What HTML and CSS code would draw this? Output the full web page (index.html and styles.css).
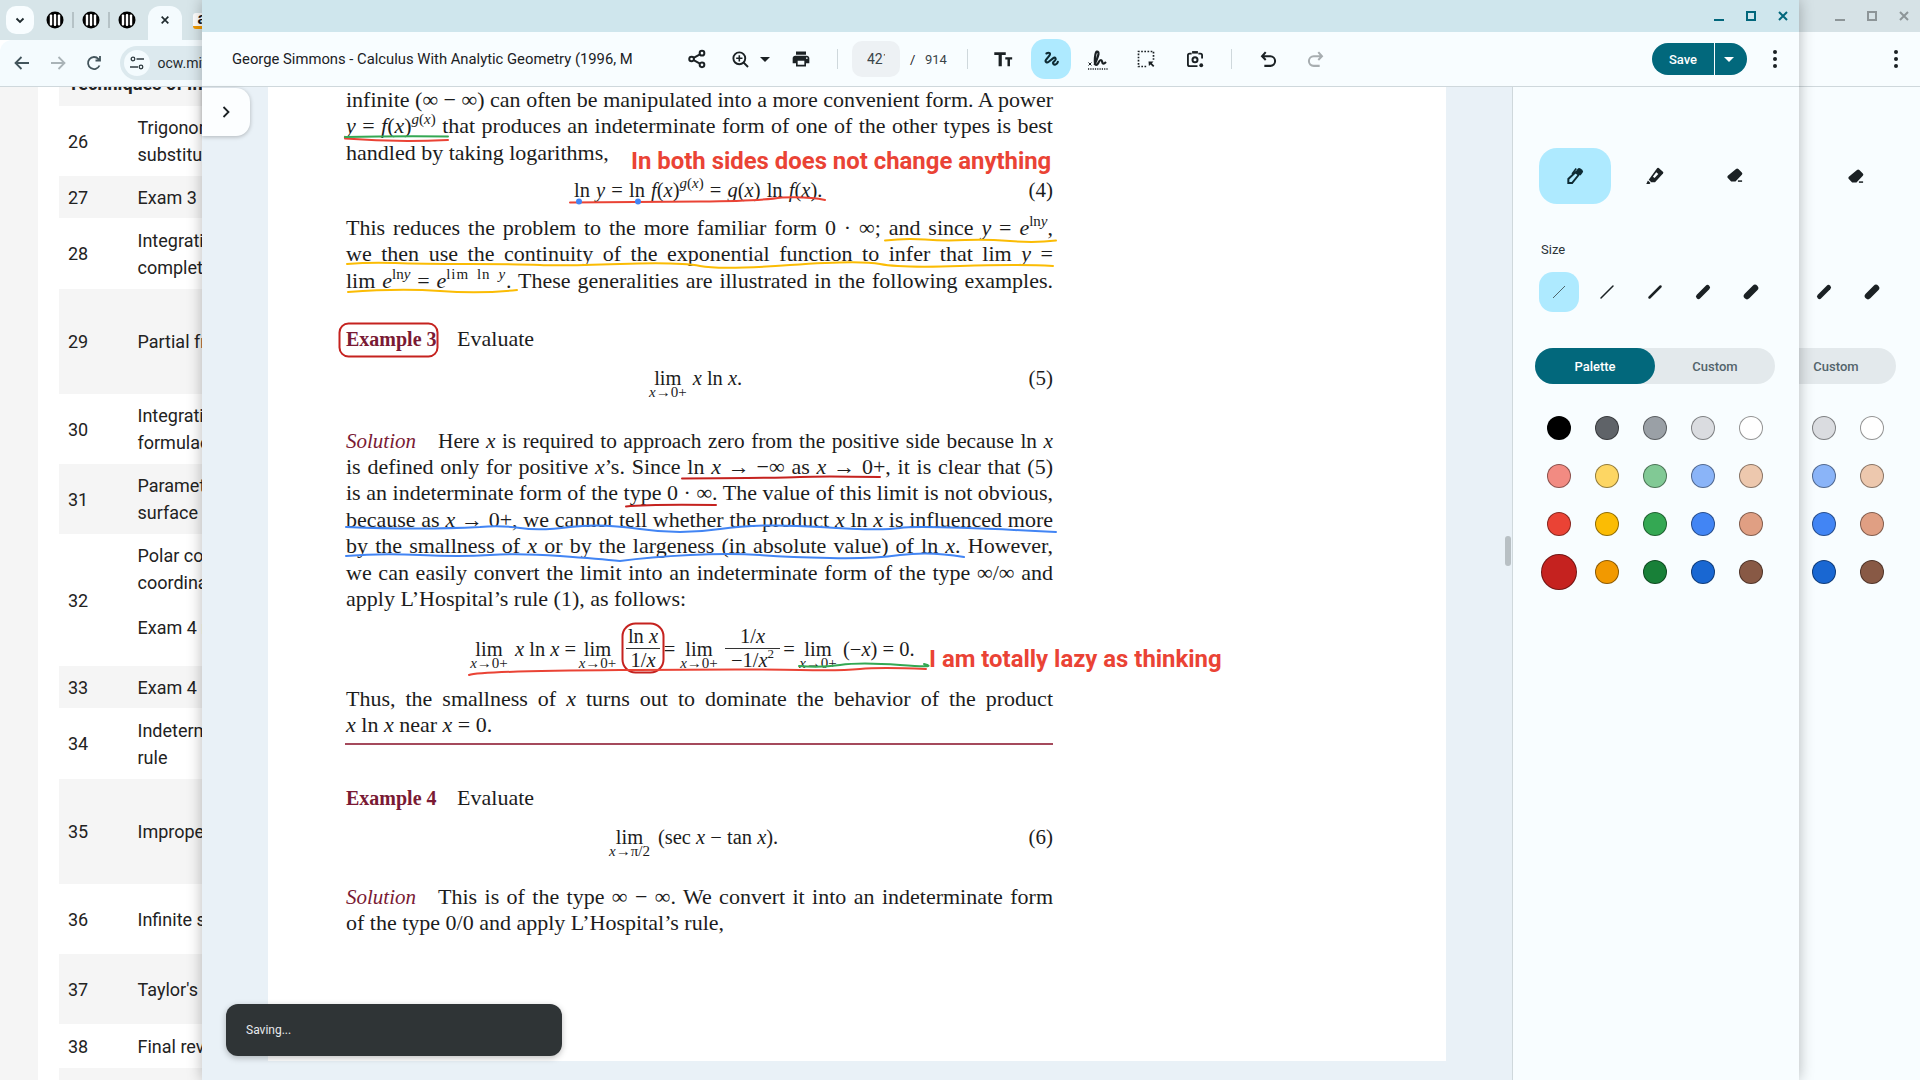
FILE: index.html
```html
<!DOCTYPE html>
<html lang="en">
<head>
<meta charset="utf-8">
<title>George Simmons - Calculus With Analytic Geometry</title>
<link rel="stylesheet" href="styles.css">
</head>
<body>
<svg class="defs" width="0" height="0" aria-hidden="true">
  <symbol id="i-eraser" viewBox="0 0 24 24"><path d="M13.2 3.6a2 2 0 0 1 2.8 0l4.2 4.2a2 2 0 0 1 0 2.800l-7.600 7.900H7.400l-4-4a2 2 0 0 1 0-2.800z" fill="#1b2124"/><rect x="15.500" y="17.200" width="5" height="1.800" fill="#1b2124"/></symbol>
  <symbol id="i-dots" viewBox="0 0 24 24"><circle cx="12" cy="5" r="2" fill="#1b2124"/><circle cx="12" cy="12" r="2" fill="#1b2124"/><circle cx="12" cy="19" r="2" fill="#1b2124"/></symbol>
  <symbol id="i-min" viewBox="0 0 12 12"><rect x="1" y="9" width="10" height="2" fill="currentColor"/></symbol>
  <symbol id="i-max" viewBox="0 0 12 12"><rect x="2" y="2" width="8" height="8" fill="none" stroke="currentColor" stroke-width="2"/></symbol>
  <symbol id="i-close" viewBox="0 0 12 12"><path d="M2 2l8 8M10 2l-8 8" fill="none" stroke="currentColor" stroke-width="2"/></symbol>
  <symbol id="i-ocw" viewBox="0 0 18 18"><circle cx="9" cy="9" r="8.500" fill="#000"/><rect x="3.800" y="3.500" width="2.400" height="11" rx="1" fill="#fff"/><rect x="7.800" y="3" width="2.400" height="12" rx="1" fill="#fff"/><rect x="11.800" y="3.500" width="2.400" height="11" rx="1" fill="#fff"/></symbol>
</svg>

<main class="desktop">
  <section class="browser">
    <header class="tabbar">
      <button class="tablist"><svg width="12" height="12" viewBox="0 0 12 12"><path d="M2.500 4.500 6 8l3.500-3.500" fill="none" stroke="#1f2a2e" stroke-width="1.800"/></svg></button>
      <span class="favtab"><svg width="18" height="18"><use href="#i-ocw"/></svg></span>
      <i class="tabsep"></i>
      <span class="favtab"><svg width="18" height="18"><use href="#i-ocw"/></svg></span>
      <i class="tabsep"></i>
      <span class="favtab"><svg width="18" height="18"><use href="#i-ocw"/></svg></span>
      <span class="acttab"><svg width="10" height="10"><use href="#i-close"/></svg></span>
      <span class="amzn">a</span>
    </header>
    <nav class="navbar">
      <svg class="nav" width="20" height="20" viewBox="0 0 20 20"><path d="M17 10H4M9.500 4 3.500 10l6 6" fill="none" stroke="#43555c" stroke-width="1.800"/></svg>
      <svg class="nav" width="20" height="20" viewBox="0 0 20 20"><path d="M3 10h13M10.500 4l6 6-6 6" fill="none" stroke="#a9b3b7" stroke-width="1.800"/></svg>
      <svg class="nav" width="20" height="20" viewBox="0 0 20 20"><path d="M15.500 12.500A6 6 0 1 1 14.500 6L16 7.500M16 3v4.500h-4.500" fill="none" stroke="#43555c" stroke-width="1.800"/></svg>
      <div class="omnibox">
        <span class="tune"><svg width="16" height="16" viewBox="0 0 16 16"><g fill="none" stroke="#2f3b40" stroke-width="1.300"><circle cx="4" cy="4" r="1.800"/><path d="M7.500 4H15M1 12h8"/><circle cx="12" cy="12" r="1.800"/></g></svg></span>
        <span class="url">ocw.mit</span>
      </div>
    </nav>
    <div class="site">
      <div class="rows">
        <div class="row head gray"><span class="headtext">Techniques of Integration</span></div>
        <div class="row h70"><span>26</span><span>Trigonometric<br>substitution</span></div>
        <div class="row h42 gray"><span>27</span><span>Exam 3</span></div>
        <div class="row h71"><span>28</span><span>Integration by inverse<br>completing the square</span></div>
        <div class="row h105 gray"><span>29</span><span>Partial fractions</span></div>
        <div class="row h70"><span>30</span><span>Integration by parts<br>formulae</span></div>
        <div class="row h70 gray"><span>31</span><span>Parametric equations<br>surface area</span></div>
        <div class="row h132"><span>32</span><div><p class="para">Polar coordinates<br>coordinates</p><p class="para">Exam 4 review</p></div></div>
        <div class="row h42 gray"><span>33</span><span>Exam 4</span></div>
        <div class="row h71"><span>34</span><span>Indeterminate forms<br>rule</span></div>
        <div class="row h105 gray"><span>35</span><span>Improper integrals</span></div>
        <div class="row h70"><span>36</span><span>Infinite series</span></div>
        <div class="row h70 gray"><span>37</span><span>Taylor's series</span></div>
        <div class="row h44"><span>38</span><span>Final review</span></div>
        <div class="row h70 gray"></div>
      </div>
    </div>
  </section>

  <aside class="under">
    <div class="under-title">
      <svg width="12" height="12"><use href="#i-min"/></svg>
      <svg width="12" height="12"><use href="#i-max"/></svg>
      <svg width="12" height="12"><use href="#i-close"/></svg>
    </div>
    <div class="under-tool"><svg width="24" height="24"><use href="#i-dots"/></svg></div>
    <div class="under-panel">
      <div class="under-eraser"><svg width="20" height="20"><use href="#i-eraser"/></svg></div>
      <div class="under-sizes">
        <span class="cell"><svg width="24" height="24"><line x1="7.500" y1="16.500" x2="16.500" y2="7.500" class="pen s4"/></svg></span>
        <span class="cell"><svg width="24" height="24"><line x1="8" y1="16" x2="16" y2="8" class="pen s5"/></svg></span>
      </div>
      <div class="under-pill">Custom</div>
      <div class="under-dots">
        <span class="cell"><i class="dot" style="background:#dadce0"></i></span><span class="cell"><i class="dot" style="background:#fff"></i></span>
        <span class="cell"><i class="dot" style="background:#8ab4f8"></i></span><span class="cell"><i class="dot" style="background:#edc8ae"></i></span>
        <span class="cell"><i class="dot" style="background:#4285f4"></i></span><span class="cell"><i class="dot" style="background:#e09f83"></i></span>
        <span class="cell"><i class="dot" style="background:#1967d2"></i></span><span class="cell"><i class="dot" style="background:#885945"></i></span>
      </div>
    </div>
  </aside>

  <section class="app">
    <div class="app-title">
      <svg width="12" height="12"><use href="#i-min"/></svg>
      <svg width="12" height="12"><use href="#i-max"/></svg>
      <svg width="12" height="12"><use href="#i-close"/></svg>
    </div>
    <div class="app-tools">
      <div class="doc-title">George Simmons - Calculus With Analytic Geometry (1996, M</div>
      <button class="btn m-share"><svg width="20" height="20" viewBox="0 0 24 24"><g fill="none" stroke="#1b2124" stroke-width="2.400"><circle cx="18" cy="5" r="2.800"/><circle cx="5.500" cy="12" r="2.800"/><circle cx="18" cy="19" r="2.800"/><path d="M8 10.600l7.500-4.200M8 13.400l7.500 4.200"/></g></svg></button>
      <button class="btn m-zoom"><svg width="19" height="19" viewBox="0 0 24 24"><g fill="none" stroke="#1b2124" stroke-width="2.400"><circle cx="10.500" cy="10.500" r="7.500"/><path d="M15.500 15.500 21.500 21.500"/></g><path d="M9.500 6.500h2v3H14.500v2h-3v3h-2v-3h-3v-2h3z" fill="#1b2124"/></svg></button>
      <span class="caret dark"></span>
      <button class="btn m-print"><svg width="20" height="20" viewBox="0 0 24 24"><path d="M19 8H5c-1.660 0-3 1.340-3 3v6h4v4h12v-4h4v-6c0-1.660-1.340-3-3-3zm-3 11H8v-5h8v5zm3-7c-.55 0-1-.45-1-1s.45-1 1-1 1 .45 1 1-.45 1-1 1zm-1-9H6v4h12V3z" fill="#1b2124"/></svg></button>
      <i class="vsep m-s1"></i>
      <div class="pagebox"><span class="pagenum">421</span></div>
      <span class="slash">/</span>
      <span class="total">914</span>
      <i class="vsep m-s2"></i>
      <button class="btn m-t"><svg width="22" height="22" viewBox="0 0 24 24"><path d="M2.500 4.500h12.500v3H10.700V20H7.200V7.500H2.500zM14.500 10h7.500v2.500h-2.400V20h-2.700v-7.500H14.500z" fill="#1b2124"/></svg></button>
      <button class="btn on m-g"><svg width="22" height="22" viewBox="0 0 24 24"><path d="M7 6c3-2 5 0 3 2.500L6.500 13c-1.500 2 1 3.500 3 2l5-4c2-1.500 3.500 1 2 2.500l-2 2c-1 1.200.5 3 2.500 2.500 1.500-.4 2.200-1.500 2.500-3" fill="none" stroke="#0e2a33" stroke-width="2.300" stroke-linecap="round"/></svg></button>
      <button class="btn m-g1"><svg width="24" height="24" viewBox="0 0 24 24"><path d="M2.500 15.500l3 3M5.500 15.500l-3 3" stroke="#1b2124" fill="none" stroke-width="1"/><path d="M8.500 18c1.500-3.500 3.500-8 4-11 .3-2-1.500-3.500-2.500-1.500-1 2-1.500 8.500-1 11 .3 1.800 2 2 3 0 .8-1.500 1.500-3.500 3-3.500s.8 3 2 3.500c1 .4 2-.5 3-1.500" fill="none" stroke="#1b2124" stroke-width="2.200"/><path d="M2 22h20" stroke="#1b2124" stroke-width="1.300" stroke-dasharray="1.200 1.100"/></svg></button>
      <button class="btn m-g2"><svg width="20" height="20" viewBox="0 0 24 24"><path d="M21 13V3H3v18h10" fill="none" stroke="#1b2124" stroke-width="2" stroke-dasharray="2 1.800"/><path d="M15 15h6l-2 2 3 3-1.500 1.500-3-3-2 2z" fill="#1b2124"/></svg></button>
      <button class="btn m-g3"><svg width="20" height="20" viewBox="0 0 24 24"><path d="M16 5.500h2.500a2 2 0 0 1 2 2v4M8 5.500H5.500a2 2 0 0 0-2 2v11a2 2 0 0 0 2 2H15" fill="none" stroke="#1b2124" stroke-width="2.200"/><path d="M8.500 2.500h7v3h-7z" fill="#1b2124"/><circle cx="12" cy="13" r="3" fill="none" stroke="#1b2124" stroke-width="2.400"/><circle cx="19.500" cy="19.500" r="2.300" fill="#1b2124"/></svg></button>
      <i class="vsep m-s3"></i>
      <button class="btn m-u"><svg width="22" height="22" viewBox="0 0 24 24"><path d="M9.500 4.500 5.500 9l4 4M5.500 9h9a5 5 0 0 1 0 10.500H8" fill="none" stroke="#1b2124" stroke-width="2.200"/></svg></button>
      <button class="btn m-r"><svg width="22" height="22" viewBox="0 0 24 24"><path d="M14.500 4.500l4 4.500-4 4M18.500 9h-9a5 5 0 0 0 0 10.500H16" fill="none" stroke="#a7adb0" stroke-width="2.200"/></svg></button>
      <div class="save"><span class="save-l">Save</span><span class="save-r"><span class="caret light"></span></span></div>
      <button class="btn m-dots"><svg width="24" height="24"><use href="#i-dots"/></svg></button>
    </div>
    <div class="app-body">
      <div class="viewer">
        <button class="expand"><svg width="16" height="16" viewBox="0 0 16 16"><path d="M5.500 3l5 5-5 5" fill="none" stroke="#1b2124" stroke-width="1.800"/></svg></button>
        <article class="sheet">
          <div class="ln">infinite (∞ − ∞) can often be manipulated into a more convenient form. A power</div>
          <div class="ln"><em>y</em> = <em>f</em>(<em>x</em>)<sup><em>g</em>(<em>x</em>)</sup> that produces an indeterminate form of one of the other types is best</div>
          <div class="ln free">handled by taking logarithms,</div>
          <div class="eq eq4"><span class="eq4-body">ln <em>y</em> = ln <em>f</em>(<em>x</em>)<sup><em>g</em>(<em>x</em>)</sup> = <em>g</em>(<em>x</em>) ln <em>f</em>(<em>x</em>).</span><span class="no">(4)</span></div>
          <div class="ln m-b">This reduces the problem to the more familiar form 0 · ∞; and since <em>y</em> = <em>e</em><sup>ln<em>y</em></sup>,</div>
          <div class="ln">we then use the continuity of the exponential function to infer that lim <em>y</em> =</div>
          <div class="ln">lim <em>e</em><sup>ln<em>y</em></sup> = <em>e</em><sup class="wide">lim ln <em>y</em></sup>. These generalities are illustrated in the following examples.</div>
          <div class="ln free m-ex3"><b class="ex">Example 3</b><span class="ev">Evaluate</span></div>
          <div class="eq eq5"><span class="lim"><span>lim</span><small><em>x</em>→0+</small></span><span class="expr"><em>x</em> ln <em>x</em>.</span><span class="no">(5)</span></div>
          <div class="ln m-sol"><em class="sol">Solution</em>Here <em>x</em> is required to approach zero from the positive side because ln <em>x</em></div>
          <div class="ln">is defined only for positive <em>x</em>’s. Since ln <em>x</em> → −∞ as <em>x</em> → 0+, it is clear that (5)</div>
          <div class="ln">is an indeterminate form of the type 0 · ∞. The value of this limit is not obvious,</div>
          <div class="ln">because as <em>x</em> → 0+, we cannot tell whether the product <em>x</em> ln <em>x</em> is influenced more</div>
          <div class="ln">by the smallness of <em>x</em> or by the largeness (in absolute value) of ln <em>x</em>. However,</div>
          <div class="ln">we can easily convert the limit into an indeterminate form of the type ∞/∞ and</div>
          <div class="ln free">apply L’Hospital’s rule (1), as follows:</div>
          <div class="math">
            <span class="lim"><span>lim</span><small><em>x</em>→0+</small></span>
            <span class="mexpr"><em>x</em> ln <em>x</em> =</span>
            <span class="lim"><span>lim</span><small><em>x</em>→0+</small></span>
            <span class="frac f1"><span>ln <em>x</em></span><span>1/<em>x</em></span></span>
            <span class="meq">=</span>
            <span class="lim"><span>lim</span><small><em>x</em>→0+</small></span>
            <span class="frac f2"><span>1/<em>x</em></span><span>−1/<em>x</em><sup>2</sup></span></span>
            <span class="meq">=</span>
            <span class="lim"><span>lim</span><small><em>x</em>→0+</small></span>
            <span class="mexpr end">(−<em>x</em>) = 0.</span>
          </div>
          <div class="ln m-thus">Thus, the smallness of <em>x</em> turns out to dominate the behavior of the product</div>
          <div class="ln free"><em>x</em> ln <em>x</em> near <em>x</em> = 0.</div>
          <hr class="rule">
          <div class="ln free m-ex4"><b class="ex">Example 4</b><span class="ev">Evaluate</span></div>
          <div class="eq eq6"><span class="lim"><span>lim</span><small><em>x</em>→π/2</small></span><span class="expr">(sec <em>x</em> − tan <em>x</em>).</span><span class="no">(6)</span></div>
          <div class="ln m-sol2"><em class="sol">Solution</em>This is of the type ∞ − ∞. We convert it into an indeterminate form</div>
          <div class="ln free">of the type 0/0 and apply L’Hospital’s rule,</div>

          <svg class="ink" viewBox="268 87 1178 974" aria-hidden="true">
            <g fill="none" stroke-linecap="round">
              <path d="M345 138.500Q395 142.500 448 140" stroke="#ea4335" stroke-width="2"/>
              <path d="M345 137Q395 136 448 136.500" stroke="#34a853" stroke-width="2"/>
              <path d="M570 202.500L700 201.500Q760 201 782 197.500Q810 196.500 825 200" stroke="#ea4335" stroke-width="2"/>
              <path d="M885 240.500Q905 238 925 239.500T965 240T1010 241T1056 240.500" stroke="#fbbc04" stroke-width="2"/>
              <path d="M347 264Q370 262 395 263T470 264T540 265T620 264T700 266T790 265T880 264T960 266T1053 266" stroke="#fbbc04" stroke-width="2"/>
              <path d="M348 292Q400 288 440 291T517 290" stroke="#fbbc04" stroke-width="2"/>
              <rect x="339.500" y="323.500" width="98" height="33" rx="9" stroke="#c5221f" stroke-width="2"/>
              <path d="M682 478.500Q780 478 800 477T880 477" stroke="#c5221f" stroke-width="2"/>
              <path d="M626 506.500Q650 504 716 505" stroke="#c5221f" stroke-width="2"/>
              <path d="M346 527Q420 530 480 527Q500 525 520 528T570 527T640 529T720 529T820 527T900 528T1056 532" stroke="#4285f4" stroke-width="2"/>
              <path d="M346 556Q380 553 420 555T490 555T560 556T620 561Q650 557 690 555T760 555T830 558T900 555T964 557" stroke="#4285f4" stroke-width="2"/>
              <rect x="622.500" y="623.500" width="41" height="49" rx="13" stroke="#c5221f" stroke-width="2"/>
              <path d="M469 675Q480 671 620 670T800 670T860 669T926 669" stroke="#ea4335" stroke-width="2"/>
              <path d="M799 666Q820 668 840 665T900 665T924 664" stroke="#34a853" stroke-width="2"/>
              <circle cx="579" cy="201.500" r="3" fill="#4285f4"/>
              <circle cx="638" cy="201.500" r="3" fill="#4285f4"/>
            </g>
          </svg>
          <span class="note n1">In both sides does not change anything</span>
          <span class="note n2">I am totally lazy as thinking</span>
        </article>
        <div class="toast">Saving...</div>
        <i class="scroll"></i>
      </div>
      <div class="panel">
        <div class="penrow">
          <button class="penbtn on"><svg width="20" height="20" viewBox="0 0 24 24"><path d="M15 3.500a2.600 2.600 0 0 1 3.600-.5l2 1.500a2.600 2.600 0 0 1 .5 3.600l-2.600 3.400-6-4.500z" fill="#0e2a33"/><path d="M12.500 7.500 16.500 10.500 8.500 20.500H4V15.500z" fill="none" stroke="#0e2a33" stroke-width="2.400"/><path d="M8.500 9.500 13.500 3" fill="none" stroke="#0e2a33" stroke-width="2"/></svg></button>
          <button class="penbtn"><svg width="20" height="20" viewBox="0 0 24 24"><path d="M16.500 2.500l5 4.500a1.500 1.500 0 0 1 .1 2.100L12 19.500H7.500L4.500 16.500 14.500 2.700a1.500 1.500 0 0 1 2-.2z" fill="#1b2124"/><path d="M9.500 13l4-5.500 2.500 2-4.500 5z" fill="#f8fdff"/><path d="M3.500 17.500l3 3-1 1H1.500z" fill="#1b2124"/></svg></button>
          <button class="penbtn"><svg width="20" height="20"><use href="#i-eraser"/></svg></button>
        </div>
        <div class="size-label">Size</div>
        <div class="sizes">
          <span class="cell on"><svg width="24" height="24"><line x1="6" y1="18" x2="18" y2="6" class="pen s1"/></svg></span>
          <span class="cell"><svg width="24" height="24"><line x1="6" y1="18" x2="18" y2="6" class="pen s2"/></svg></span>
          <span class="cell"><svg width="24" height="24"><line x1="6.500" y1="17.500" x2="17.500" y2="6.500" class="pen s3"/></svg></span>
          <span class="cell"><svg width="24" height="24"><line x1="7.500" y1="16.500" x2="16.500" y2="7.500" class="pen s4"/></svg></span>
          <span class="cell"><svg width="24" height="24"><line x1="8" y1="16" x2="16" y2="8" class="pen s5"/></svg></span>
        </div>
        <div class="toggle"><span class="seg sel">Palette</span><span class="seg">Custom</span></div>
        <div class="palette">
          <span class="cell"><i class="dot" style="background:#000"></i></span>
          <span class="cell"><i class="dot" style="background:#5f6368"></i></span>
          <span class="cell"><i class="dot" style="background:#9aa0a6"></i></span>
          <span class="cell"><i class="dot" style="background:#dadce0"></i></span>
          <span class="cell"><i class="dot" style="background:#fff"></i></span>
          <span class="cell"><i class="dot" style="background:#f28b82"></i></span>
          <span class="cell"><i class="dot" style="background:#fdd663"></i></span>
          <span class="cell"><i class="dot" style="background:#81c995"></i></span>
          <span class="cell"><i class="dot" style="background:#8ab4f8"></i></span>
          <span class="cell"><i class="dot" style="background:#edc8ae"></i></span>
          <span class="cell"><i class="dot" style="background:#ea4335"></i></span>
          <span class="cell"><i class="dot" style="background:#fbbc04"></i></span>
          <span class="cell"><i class="dot" style="background:#34a853"></i></span>
          <span class="cell"><i class="dot" style="background:#4285f4"></i></span>
          <span class="cell"><i class="dot" style="background:#e09f83"></i></span>
          <span class="cell"><i class="dot big" style="background:#c5221f"></i></span>
          <span class="cell"><i class="dot" style="background:#f29900"></i></span>
          <span class="cell"><i class="dot" style="background:#188038"></i></span>
          <span class="cell"><i class="dot" style="background:#1967d2"></i></span>
          <span class="cell"><i class="dot" style="background:#885945"></i></span>
        </div>
      </div>
    </div>
  </section>
</main>
</body>
</html>
```
FILE: styles.css
```css
* { box-sizing: border-box; }
html, body { margin: 0; padding: 0; }
body { width: 1920px; height: 1080px; overflow: hidden; font-family: Roboto, "Liberation Sans", sans-serif; color: #1b2124; }
button { border: 0; padding: 0; background: none; font: inherit; color: inherit; }
.defs { position: absolute; }
.desktop { position: relative; display: flex; width: 1920px; height: 1080px; overflow: hidden; }

/* background browser */
.browser { width: 1799px; flex: none; display: flex; flex-direction: column; }
.tabbar { height: 40px; background: #d7e5e9; display: flex; align-items: flex-start; padding: 6px 0 0 6px; flex: none; }
.tablist { width: 28px; height: 28px; border-radius: 10px; background: #f8fdff; display: flex; align-items: center; justify-content: center; }
.favtab { width: 18px; height: 18px; margin: 5px 0 0 12px; display: block; }
.favtab + .tabsep { margin-left: 8.250px; }
.tabsep + .favtab { margin-left: 8.250px; }
.favtab svg { display: block; }
.tabsep { width: 1.500px; height: 16px; background: #b5c2c6; margin-top: 6px; }
.acttab { width: 34px; height: 34px; margin-left: 12px; background: #f4fbfe; border-radius: 12px 12px 0 0; display: flex; align-items: center; justify-content: center; color: #1f2a2e; padding-bottom: 6px; }
.amzn { width: 18px; height: 16px; margin: 7px 0 0 11px; border-radius: 3px; background: #fff; border-bottom: 3px solid #f29900; font: 700 16px/12px "Liberation Sans", sans-serif; color: #111; text-align: center; }
.navbar { height: 47px; flex: none; background: #f4fbfe; border-radius: 12px 0 0 0; display: flex; align-items: center; padding: 0 0 0 12px; gap: 16px; border-bottom: 1px solid #cfd8dc; }
.nav { display: block; }
.omnibox { height: 34px; width: 900px; border-radius: 17px; background: #dce9ee; display: flex; align-items: center; padding-left: 4px; }
.tune { width: 26px; height: 26px; border-radius: 50%; background: #f4fbfe; display: flex; align-items: center; justify-content: center; }
.url { margin-left: 7.500px; font-size: 14px; color: #1f2a2e; white-space: nowrap; }
.site { flex: 1; overflow: hidden; background: #fff; border-left: 38px solid #f5f5f5; padding-left: 21px; }
.rows { margin-top: -30px; font-size: 18px; line-height: 27px; color: #222; }
.row { display: grid; grid-template-columns: 69.500px 1fr; align-items: center; padding-left: 9px; white-space: nowrap; }
.row.gray { background: #f5f5f5; }
.head { display: block; height: 49px; padding-top: 13px; }
.headtext { font-weight: 700; }
.h42 { height: 42px; } .h44 { height: 44px; } .h70 { height: 70px; } .h71 { height: 71px; } .h105 { height: 105px; } .h132 { height: 132px; }
.para { margin: 0 0 18px; }

/* window underneath on the right */
.under { width: 121px; flex: none; background: #f8fdff; display: flex; flex-direction: column; }
.under-title { height: 32px; background: #d6e2e6; display: flex; gap: 20px; align-items: center; padding-left: 35px; color: #8d9598; }
.under-title svg, .app-title svg { display: block; }
.under-tool { height: 55px; border-bottom: 1px solid #cfd8dc; display: flex; align-items: center; padding-left: 85px; }
.under-panel { flex: 1; padding-top: 80px; }
.under-eraser { height: 20px; padding-left: 47px; }
.under-eraser svg { display: block; }
.under-sizes { display: flex; margin-top: 85px; padding-left: 1px; }
.under-pill { width: 97px; height: 36px; margin-top: 36px; background: #e3e9ec; border-radius: 0 18px 18px 0; padding-right: 23px; display: flex; align-items: center; justify-content: center; font-size: 13px; font-weight: 500; color: #53646b; }
.under-dots { display: grid; grid-template-columns: 48px 48px; grid-auto-rows: 48px; margin-top: 20px; padding-left: 1px; }

/* front window */
.app { position: absolute; left: 202px; top: 0; width: 1597px; height: 1080px; display: flex; flex-direction: column; background: #e9f1f7; box-shadow: 0 0 14px rgba(0,0,0,.28); }
.app-title { height: 32px; flex: none; background: #cfe6ed; display: flex; justify-content: flex-end; align-items: center; gap: 20px; padding-right: 10px; color: #02677c; }
.app-tools { height: 55px; flex: none; background: #f8fdff; border-bottom: 1px solid #cfd8dc; display: flex; align-items: center; padding-left: 30px; }
.doc-title { width: 400px; flex: none; overflow: hidden; white-space: nowrap; font-size: 14.800px; color: #1b2124; }
.btn { width: 40px; height: 40px; flex: none; display: flex; align-items: center; justify-content: center; border-radius: 14px; }
.btn.on { background: #aeeaff; }
.m-share { margin-left: 44.500px; }
.m-zoom { margin-left: 3.500px; }
.caret { width: 0; height: 0; border-left: 5px solid transparent; border-right: 5px solid transparent; display: block; }
.caret.dark { border-top: 5px solid #1b2124; flex: none; }
.caret.light { border-top: 5px solid #fff; }
.m-print { margin-left: 10.500px; }
.vsep { width: 1px; height: 20px; background: #cfd8dc; flex: none; }
.m-s1 { margin-left: 16.500px; }
.pagebox { width: 48px; height: 36px; margin-left: 14px; border-radius: 10px; background: #edf1f4; display: flex; align-items: center; justify-content: center; flex: none; }
.pagenum { width: 18px; overflow: hidden; font-size: 14px; color: #3a4448; white-space: nowrap; }
.slash { margin-left: 10px; font-size: 13px; width: 4px; flex: none; }
.total { margin-left: 11px; font-size: 13px; width: 22px; flex: none; color: #3a4448; }
.m-s2 { margin-left: 19.600px; }
.m-t { margin-left: 15.400px; }
.m-g { margin-left: 8px; }
.m-g1 { margin-left: 7px; }
.m-g2 { margin-left: 8.500px; }
.m-g3 { margin-left: 8.500px; }
.m-s3 { margin-left: 16px; }
.m-u { margin-left: 16px; }
.m-r { margin-left: 8px; }
.save { margin-left: 316px; width: 95px; height: 32px; display: flex; flex: none; color: #fff; font-size: 13px; font-weight: 500; }
.save-l { width: 62px; background: #02687c; border-radius: 16px 0 0 16px; display: flex; align-items: center; justify-content: center; }
.save-r { width: 32px; margin-left: 1px; background: #02687c; border-radius: 0 16px 16px 0; display: flex; align-items: center; justify-content: center; padding-right: 4px; }
.m-dots { margin-left: 8px; }
.app-body { flex: 1; display: flex; min-height: 0; }

.viewer { position: relative; width: 1310px; flex: none; padding-left: 66px; }
.expand { position: absolute; left: 0; top: 1px; width: 48px; height: 48px; background: #fcfeff; border-radius: 0 14px 14px 0; box-shadow: 0 1px 4px rgba(0,0,0,.25); display: flex; align-items: center; justify-content: center; z-index: 2; }
.sheet { position: relative; width: 1178px; height: 974px; background: #fff; padding-left: 78px; font-family: "Liberation Serif", serif; font-size: 22px; line-height: 26.400px; color: #1c1c1c; overflow: hidden; }
.ln { width: 707px; height: 26.400px; text-align: justify; text-align-last: justify; }
.ln.free { text-align-last: left; white-space: nowrap; }
sup { font-size: 15px; line-height: 0; vertical-align: 9px; }
sup.wide { letter-spacing: .9px; word-spacing: 2px; }
.eq { width: 707px; display: flex; white-space: nowrap; font-size: 20.500px; }
.no { margin-left: auto; font-size: 21px; }
.eq4 { height: 26.400px; margin-top: 10.800px; padding-left: 228px; }
.eq4-body { word-spacing: 1px; }
.m-b { margin-top: 11.400px; }
.m-ex3 { margin-top: 31.800px; }
.ex { color: #7a1a34; font-size: 20px; }
.ev { margin-left: 20.500px; }
.eq5 { height: 40px; margin-top: 12.600px; padding-left: 303px; }
.lim { display: flex; flex-direction: column; align-items: center; }
.lim small { font-size: 15px; line-height: 13px; margin-top: -5px; white-space: nowrap; }
.expr { margin-left: 6px; }
.eq6 .expr { margin-left: 8px; }
.m-sol { margin-top: 23px; font-size: 21.300px; }
.sol { color: #7a1a34; margin-right: 22px; font-size: 21px; }
.math { width: 707px; height: 50px; margin-top: 10.400px; padding: 12.800px 0 0 123px; display: grid; grid-template-columns: 40px 69px 39px 43px 19px 40px 61px 18px 40px auto; font-size: 20.500px; white-space: nowrap; align-items: start; }
.mexpr { padding-left: 6px; }
.mexpr.end { padding-left: 5px; }
.meq { text-align: center; }
.frac { display: flex; flex-direction: column; align-items: center; justify-self: end; margin-top: -11px; line-height: 23px; }
.frac sup { font-size: 13px; }
.f1 { width: 34px; }
.f2 { width: 55px; }
.frac span:first-child { border-bottom: 1.500px solid #333; align-self: stretch; text-align: center; }
.m-thus { margin-top: 12.800px; }
.rule { width: 708px; height: 1.500px; margin: 5px 0 0 -1px; border: 0; background: #a54a5c; }
.m-ex4 { margin-top: 39.800px; }
.eq6 { height: 40px; margin-top: 12.600px; padding-left: 263px; }
.m-sol2 { margin-top: 20px; }
.ink { position: absolute; left: 0; top: 0; width: 1178px; height: 974px; }
.note { position: absolute; font-family: Roboto, sans-serif; font-weight: 700; font-size: 23.900px; line-height: 28px; color: #ea4335; white-space: nowrap; }
.n1 { left: 363px; top: 60px; }
.n2 { left: 661px; top: 558px; }

.toast { position: absolute; left: 24px; top: 917px; width: 336px; height: 52px; background: #2f3436; border-radius: 12px; color: #e8eaed; font-size: 12px; display: flex; align-items: center; padding-left: 20px; box-shadow: 0 2px 6px rgba(0,0,0,.25); z-index: 3; }
.scroll { position: absolute; left: 1303px; top: 449px; width: 6px; height: 30px; border-radius: 3px; background: #b8c0c4; }

/* side panel */
.panel { flex: 1; background: #f8fdff; border-left: 1px solid #cfd8dc; padding: 61px 0 0 26px; }
.penrow { display: flex; gap: 8px; }
.penbtn { width: 72px; height: 56px; display: flex; align-items: center; justify-content: center; border-radius: 18px; }
.penbtn.on { background: #aeeaff; }
.size-label { margin: 37px 0 0 2px; font-size: 13px; line-height: 18px; color: #2c3437; }
.sizes { display: flex; gap: 8px; margin-top: 13px; }
.cell { width: 48px; height: 48px; display: flex; align-items: center; justify-content: center; flex: none; }
.sizes .cell { width: 40px; height: 40px; border-radius: 14px; }
.under-sizes .cell { height: 40px; }
.cell.on { background: #aeeaff; }
.pen { stroke: #1b2124; stroke-linecap: round; }
.s1 { stroke: #4f656c; stroke-width: 1; stroke-linecap: butt; }
.s2 { stroke-width: 1.500; }
.s3 { stroke-width: 2.500; }
.s4 { stroke-width: 5; }
.s5 { stroke-width: 6.500; }
.toggle { width: 240px; height: 36px; margin: 36px 0 0 -4px; background: #e3e9ec; border-radius: 18px; display: flex; font-size: 13px; font-weight: 500; color: #53646b; }
.seg { width: 120px; display: flex; align-items: center; justify-content: center; border-radius: 18px; }
.seg.sel { background: #02687c; color: #fff; }
.palette { width: 240px; margin: 20px 0 0 -4px; display: grid; grid-template-columns: repeat(5, 48px); grid-auto-rows: 48px; }
.dot { width: 24px; height: 24px; border-radius: 50%; border: 1px solid rgba(0,0,0,.42); display: block; flex: none; }
.dot.big { width: 36px; height: 36px; }
```
